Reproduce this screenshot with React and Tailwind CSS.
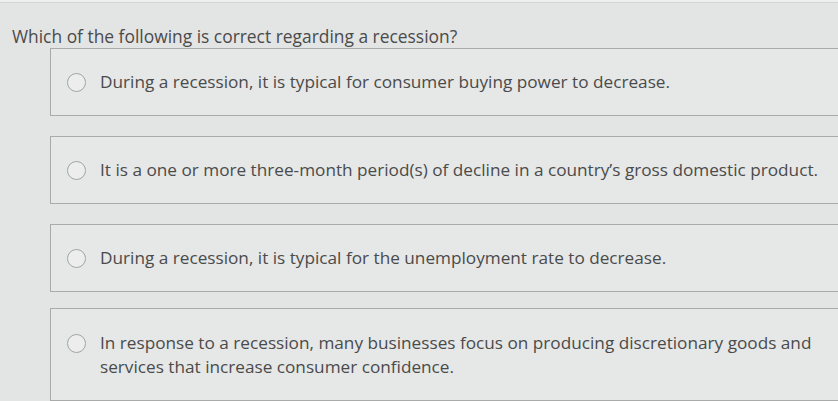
const options = [
  'During a recession, it is typical for consumer buying power to decrease.',
  'It is a one or more three-month period(s) of decline in a country\u2019s gross domestic product.',
  'During a recession, it is typical for the unemployment rate to decrease.',
  'In response to a recession, many businesses focus on producing discretionary goods and services that increase consumer confidence.',
]

function Radio() {
  return <span className="mt-[3px] w-[19px] h-[19px] rounded-full border-[1.5px] border-[#a2a4a4] bg-[#ededed] flex-shrink-0" />
}

export default function App() {
  return (
    <div
      className="w-[838px] h-[401px] overflow-hidden bg-[#e3e4e4] text-[#4a4b4b]"
      style={{ fontFamily: '"Open Sans", sans-serif' }}
    >
      <div className="h-[3px] bg-[#eef0f0] border-b border-[#d4d6d6]" />
      {/* Question */}
      <div className="pl-[12px] pt-[21px] text-[17.4px] leading-[24px]">
        Which of the following is correct regarding a recession?
      </div>

      {/* Options */}
      <div className="pl-[50px] flex flex-col gap-[20px]">
        {options.map((text, i) => (
          <div
            key={i}
            className={`w-[820px] border border-[#a9abab] bg-[#e6e7e7] flex items-center pl-[16px] ${
              i === 3 ? 'h-[93px] mt-[-4px]' : 'h-[68px]'
            }`}
          >
            <div className="flex items-start gap-[14px]">
              <Radio />
              <div className="w-[740px] text-[17.2px] leading-[24px]">{text}</div>
            </div>
          </div>
        ))}
      </div>
    </div>
  )
}
